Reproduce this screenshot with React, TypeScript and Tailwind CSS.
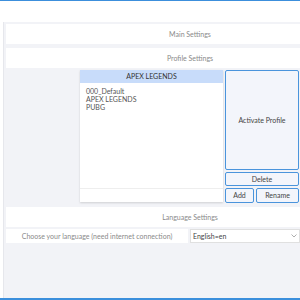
import { useState } from "react";

const profiles = ["000_Default", "APEX LEGENDS", "PUBG"];

const App = () => {
  const [selected] = useState("APEX LEGENDS");

  return (
    <div
      className="w-[300px] h-[300px] bg-white flex flex-col overflow-hidden text-[7px]"
      style={{ fontFamily: 'Lato, "Open Sans", sans-serif' }}
    >
      <div className="h-px bg-[#3c8fdc]" />
      <div className="h-[21px] bg-white" />
      <div className="flex-1 flex pl-[3px]">
        <div className="w-px bg-[#e6e7ec]" />
        <div className="flex-1 bg-[#f2f3f7] flex flex-col pt-[2px] pl-[2px] gap-[4px]">
          <div className="h-[20px] bg-white flex items-center justify-center pl-[74px] text-[#8a8a8a]">
            Main Settings
          </div>
          <div className="h-[20px] bg-white flex items-center justify-center pl-[74px] text-[#8a8a8a]">
            Profile Settings
          </div>
          <div className="flex -mt-[2px] pl-[74px] gap-[2px]">
            <div className="w-[143px] h-[132px] bg-white shadow-[0_1px_2px_rgba(0,0,0,0.15)] flex flex-col">
              <div className="h-[13px] bg-[#c8dcfa] flex items-center justify-center text-[#333]">
                {selected}
              </div>
              <div className="flex-1 px-[6px] pt-[4px] text-[#555] leading-[8px]">
                {profiles.map((p) => (
                  <div key={p}>{p}</div>
                ))}
              </div>
              <div className="h-[14px] border-t border-[#eeeeee]" />
            </div>
            <div className="w-[74px] flex flex-col gap-[2px]">
              <button className="h-[100px] bg-[#f3f5fb] border border-[#4a94dc] rounded-[2px] text-[#444]">
                Activate Profile
              </button>
              <button className="h-[14px] bg-[#f3f5fb] border border-[#4a94dc] rounded-[2px] text-[#444]">
                Delete
              </button>
              <div className="flex gap-[2px]">
                <button className="w-[29px] h-[15px] bg-[#f3f5fb] border border-[#4a94dc] rounded-[2px] text-[#444]">
                  Add
                </button>
                <button className="flex-1 h-[15px] bg-[#f3f5fb] border border-[#4a94dc] rounded-[2px] text-[#444]">
                  Rename
                </button>
              </div>
            </div>
          </div>
          <div className="h-[20px] bg-white flex items-center justify-center pl-[74px] text-[#8a8a8a]">
            Language Settings
          </div>
          <div className="flex h-[14px] gap-[2px] -mt-[2px]">
            <div className="w-[182px] bg-white flex items-center justify-center whitespace-nowrap text-[#8a8a8a]">
              Choose your language (need internet connection)
            </div>
            <div className="flex-1 bg-white border border-[#e0e0e0] flex items-center justify-between pl-[2px] pr-[2px] text-[#444]">
              <span>English=en</span>
              <svg width="6" height="4" viewBox="0 0 6 4">
                <path d="M0.5 0.5 L3 3 L5.5 0.5" fill="none" stroke="#999" strokeWidth="0.8" />
              </svg>
            </div>
          </div>
        </div>
      </div>
      <div className="h-[2px] bg-[#3c8fdc]" />
    </div>
  );
};

export default App;
